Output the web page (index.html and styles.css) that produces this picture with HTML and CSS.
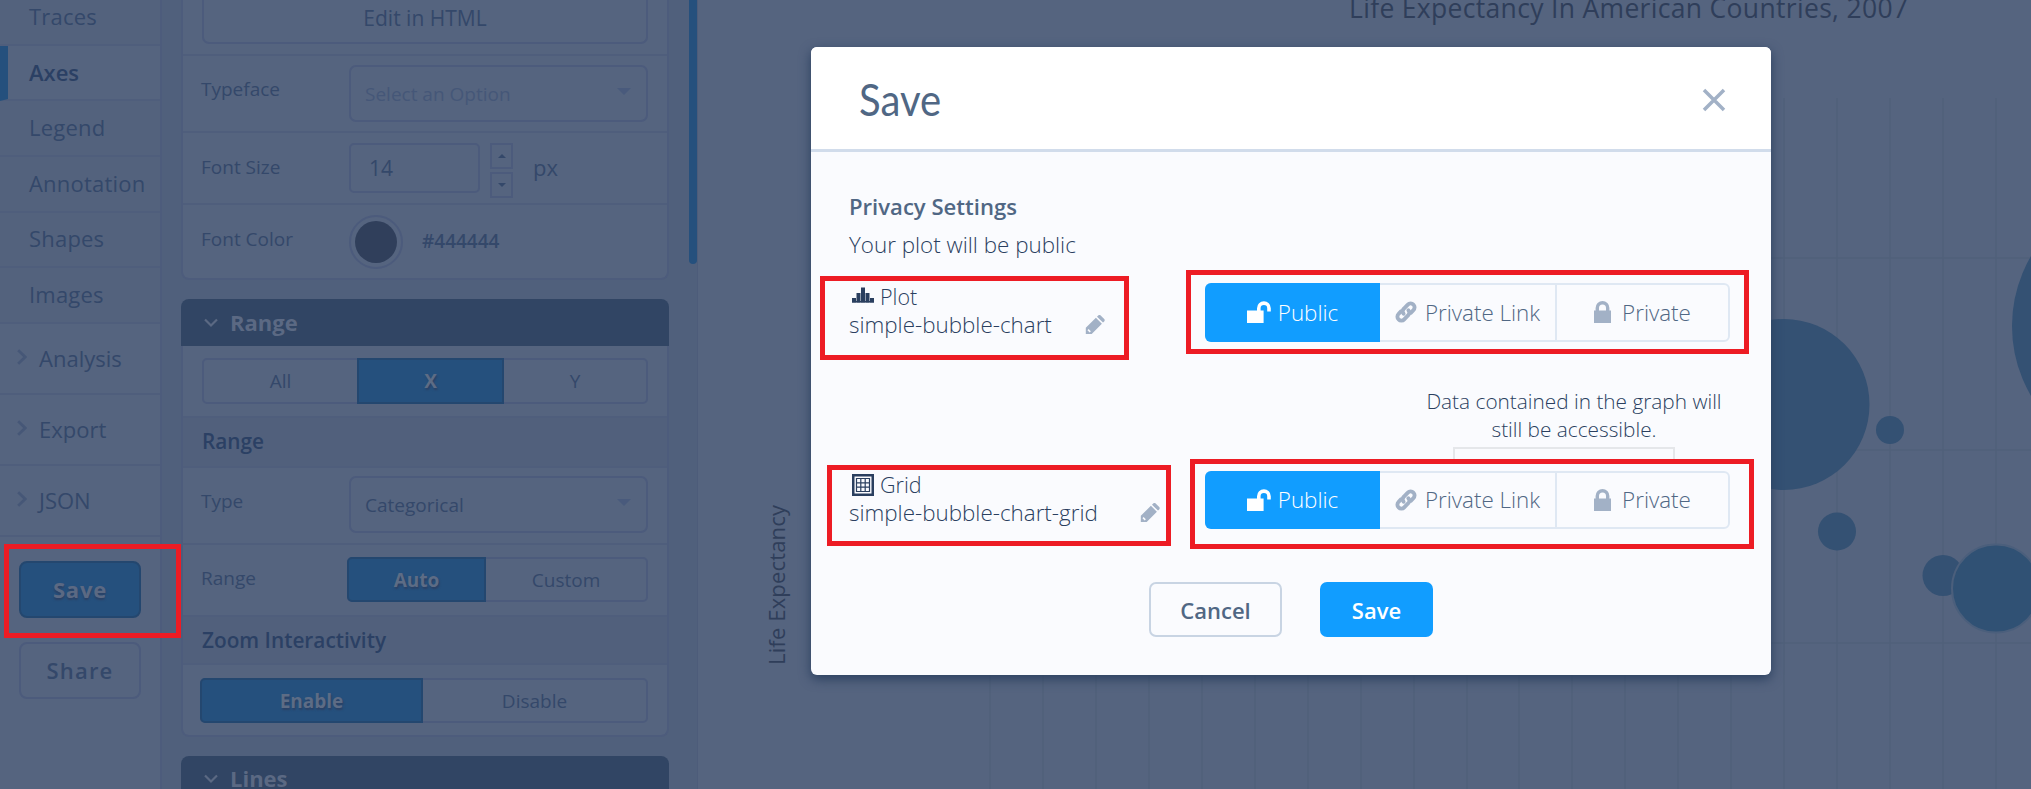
FILE: index.html
```html
<!DOCTYPE html>
<html lang="en">
<head>
<meta charset="utf-8">
<title>Save plot</title>
<link rel="stylesheet" href="styles.css">
</head>
<body>
<svg class="defs" width="0" height="0">
  <symbol id="unlock" viewBox="0 0 24 22"><path d="M0 9.5h10V7.2a6.9 6.9 0 0 1 13.8 0v3.3h-3.6V7.2a3.3 3.3 0 0 0-6.6 0v2.3H16.6V22H0z"/></symbol>
  <symbol id="lock" viewBox="0 0 17 22"><path d="M1.6 9.5V7a6.9 6.9 0 0 1 13.8 0v2.5H17V22H0V9.5zM5 9.500h7V7a3.500 3.500 0 0 0-7 0z"/></symbol>
  <symbol id="link" viewBox="0 0 22 22"><g fill="none" stroke="currentColor" stroke-width="3.900" stroke-linecap="round"><path d="M8.600 12.800a3.800 3.800 0 0 1 .4-5.300l3.800-3.900a3.800 3.800 0 0 1 5.600 0a3.800 3.800 0 0 1 0 5.500l-2.600 2.700"/><path d="M13.400 9.200a3.800 3.800 0 0 1-.4 5.300l-3.800 3.900a3.800 3.800 0 0 1-5.600 0a3.800 3.800 0 0 1 0-5.500l2.600-2.700"/></g></symbol>
  <symbol id="pencil" viewBox="0 0 20 20"><path d="M.8 12.800 10.900 2.800l6 5.900L6.700 19H.8zM12 1.700l1.200-1.200a1.800 1.800 0 0 1 2.500 0l3.500 3.500a1.800 1.800 0 0 1 0 2.400L18 7.600z"/><path d="m3 14.600 2.300 2.300" stroke="#fafbfe" stroke-width="1.500"/></symbol>
  <symbol id="chev" viewBox="0 0 10 16"><path d="m1.200 1.200 7 6.800-7 6.800" fill="none" stroke="currentColor" stroke-width="2.800"/></symbol>
  <symbol id="down" viewBox="0 0 14 10"><path d="m1 1.500 6 6 6-6" fill="none" stroke="currentColor" stroke-width="2.200"/></symbol>
</svg>

<div class="app">
  <nav class="sidebar">
    <div class="item">Traces</div>
    <div class="item active">Axes</div>
    <div class="item">Legend</div>
    <div class="item">Annotation</div>
    <div class="item">Shapes</div>
    <div class="item">Images</div>
    <div class="group"><svg class="chev"><use href="#chev"/></svg>Analysis</div>
    <div class="group"><svg class="chev"><use href="#chev"/></svg>Export</div>
    <div class="group"><svg class="chev"><use href="#chev"/></svg>JSON</div>
    <div class="side-actions">
      <div class="side-btn primary">Save</div>
      <div class="side-btn">Share</div>
    </div>
  </nav>

  <section class="panel">
    <div class="card first">
      <div class="row row-edit"><div class="edit">Edit in HTML</div></div>
      <div class="row row-typeface"><span class="label">Typeface</span><div class="select faint">Select an Option<i class="caret"></i></div></div>
      <div class="row row-size"><span class="label">Font Size</span><div class="number">14</div>
        <div class="spin"><b><i class="up"></i></b><b><i class="dn"></i></b></div><span class="unit">px</span></div>
      <div class="row row-color"><span class="label">Font Color</span><div class="swatch"><i></i></div><span class="hex">#444444</span></div>
    </div>

    <div class="card-head"><svg class="down"><use href="#down"/></svg>Range</div>
    <div class="card second">
      <div class="row row-xy"><div class="seg seg-xy"><span>All</span><span class="on">X</span><span>Y</span></div></div>
      <div class="row sub">Range</div>
      <div class="row row-type"><span class="label">Type</span><div class="select">Categorical<i class="caret"></i></div></div>
      <div class="row row-range"><span class="label">Range</span><div class="seg seg-auto"><span class="on">Auto</span><span>Custom</span></div></div>
      <div class="row sub zoom">Zoom Interactivity</div>
      <div class="row row-zoom"><div class="seg seg-zoom"><span class="on">Enable</span><span>Disable</span></div></div>
    </div>

    <div class="card-head lines"><svg class="down"><use href="#down"/></svg>Lines</div>
    <div class="scrollbar"></div>
  </section>

  <main class="chart">
    <svg class="plot" viewBox="698 0 1333 789">
      <g class="grid">
        <path d="M990 98V789M1043 98V789M1096 98V789M1149 98V789M1202 98V789M1255 98V789M1308 98V789M1361 98V789M1414 98V789M1467 98V789M1519 98V789M1572 98V789M1625 98V789M1678 98V789M1731 98V789M1784 98V789M1837 98V789M1890 98V789M1943 98V789M1996 98V789"/>
        <path d="M937 258H2031M937 450H2031M937 643H2031"/>
      </g>
      <g class="bubbles">
        <circle cx="1784" cy="404.500" r="85.500"/>
        <circle cx="1890" cy="430" r="14"/>
        <circle cx="1837" cy="531.500" r="19"/>
        <circle cx="1943" cy="575.500" r="20.500"/>
        <circle class="ring" cx="1996" cy="588.500" r="44"/>
        <circle cx="2150" cy="326" r="138"/>
      </g>
      <text class="title" x="1349" y="17.500" textLength="559">Life Expectancy In American Countries, 2007</text>
      <text class="axis" transform="translate(785 665) rotate(-90)" textLength="160">Life Expectancy</text>
    </svg>
  </main>
</div>

<div class="modal">
  <header class="modal-head">
    <h1>Save</h1>
    <svg class="close" viewBox="0 0 24 24"><path d="M2 2 22 22M22 2 2 22"/></svg>
  </header>
  <div class="modal-body">
    <h2>Privacy Settings</h2>
    <p class="lead">Your plot will be public</p>
    <div class="file">
      <div class="info">
        <div class="kind"><svg class="kind-icon" viewBox="0 0 22 22"><path d="M0 12h4v4.500H0zM4.500 7h4v9.500h-4zM9 1.500h4v15H9zM13.500 7h4v9.500h-4zM18 12h4v4.500h-4z"/><path d="M0 15h22v1.500H0z"/></svg>Plot</div>
        <div class="name plot-name">simple-bubble-chart<svg class="pencil"><use href="#pencil"/></svg></div>
      </div>
      <div class="privacy">
        <span class="on"><svg class="i-unlock"><use href="#unlock"/></svg>Public</span>
        <span class="mid"><svg class="i-link"><use href="#link"/></svg>Private Link</span>
        <span><svg class="i-lock"><use href="#lock"/></svg>Private</span>
      </div>
    </div>
    <p class="note">Data contained in the graph will<br>still be accessible.</p>
    <div class="bracket"></div>
    <div class="file second-file">
      <div class="info">
        <div class="kind"><svg class="kind-icon" viewBox="0 0 22 22"><path class="frame" d="M1.250 1.250h19.500v19.500H1.250z"/><path class="cells" d="M4.500 4.500h13v13h-13zM8.800 4.500v13M13.200 4.500v13M4.500 8.800h13M4.500 13.200h13"/></svg>Grid</div>
        <div class="name grid-name">simple-bubble-chart-grid<svg class="pencil"><use href="#pencil"/></svg></div>
      </div>
      <div class="privacy">
        <span class="on"><svg class="i-unlock"><use href="#unlock"/></svg>Public</span>
        <span class="mid"><svg class="i-link"><use href="#link"/></svg>Private Link</span>
        <span><svg class="i-lock"><use href="#lock"/></svg>Private</span>
      </div>
    </div>
    <div class="actions"><div class="btn cancel">Cancel</div><div class="btn save">Save</div></div>
  </div>
</div>

<div class="mark mark-save"></div>
<div class="mark mark-plot"></div>
<div class="mark mark-plot-privacy"></div>
<div class="mark mark-grid"></div>
<div class="mark mark-grid-privacy"></div>
</body>
</html>
```
FILE: styles.css
```css
* { box-sizing: border-box; }
body { margin: 0; height: 789px; overflow: hidden; position: relative; background: #55647f; font-family: "Open Sans", sans-serif; color: #34486a; }
svg { display: block; fill: currentColor; flex: none; }
.defs { position: absolute; }
h1, h2, p { margin: 0; }
.app { display: flex; height: 789px; overflow: hidden; }

/* Sidebar */
.sidebar { width: 162px; flex: none; border-right: 2px solid #4d5c7c; margin-top: -10px; height: 799px; font-size: 22px; letter-spacing: .2px; white-space: nowrap; }
.item { height: 55.660px; padding: 0 0 2px 29px; display: flex; align-items: center; border-bottom: 2px solid #4f5e7c; background: #53627d; }
.item.active { background: #55647f; border-left: 8px solid #25507d; padding-left: 21px; padding-bottom: 0; font-weight: 600; color: #2b4064; letter-spacing: 0; }
.group { height: 71px; display: flex; align-items: center; gap: 12px; padding-left: 17px; border-bottom: 2px solid #4f5e7c; letter-spacing: 0; }
.chev { width: 10px; height: 16px; color: #465777; margin-top: -3px; }
.side-actions { padding: 24px 0 0 19px; display: flex; flex-direction: column; gap: 24px; }
.side-btn { width: 122px; height: 57px; border: 2px solid #4c5b7c; border-radius: 8px; display: flex; align-items: center; justify-content: center; font-weight: 600; letter-spacing: 1.200px; }
.side-btn.primary { background: #25507d; border-color: #24476f; color: #5b6983; font-weight: 700; letter-spacing: .8px; text-shadow: 0 2px 2px #2b4064; }

/* Settings panel */
.panel { width: 536px; flex: none; background: #50607c; padding-left: 19px; position: relative; border-right: 1px solid #4d5c7a; }
.card { width: 488px; background: #55647f; border: 2px solid #4d5c7c; border-top: 0; border-radius: 0 0 8px 8px; font-size: 19px; }
.first { height: 280px; }
.second { height: 391px; }
.row { display: flex; align-items: flex-start; border-bottom: 2px solid #4f5e7c; padding-left: 19px; }
.row:last-child { border-bottom: 0; }
.label { width: 148px; margin-left: -1px; flex: none; line-height: 26px; }
.row-edit { height: 56px; }
.edit { width: 446px; height: 44px; border: 2px solid #4c5b7c; border-top: 0; border-radius: 0 0 7px 7px; display: flex; justify-content: center; padding-top: 4px; line-height: 28px; font-size: 21px; }
.row-typeface { height: 77px; padding-top: 9px; }
.row-typeface .label { padding-top: 11px; }
.row-type .label { padding-top: 12px; }
.select { width: 299px; height: 57px; border: 2px solid #4c5b7c; border-radius: 7px; padding: 0 15px 0 14px; display: flex; align-items: center; justify-content: space-between; }
.faint { color: #455778; }
.caret { border: 7.500px solid transparent; border-top-color: #495a7c; border-bottom: 0; margin-top: -4px; }
.row-size { height: 72px; padding-top: 10px; }
.row-size .label { padding-top: 11px; }
.number { width: 131px; height: 50px; border: 2px solid #4c5b7c; border-radius: 5px; padding-left: 18px; font-size: 21px; line-height: 47px; }
.spin { margin-left: 10px; display: flex; flex-direction: column; gap: 3px; }
.spin b { width: 23px; height: 26px; border: 2px solid #4c5b7c; display: flex; align-items: center; justify-content: center; }
.up { border: 4.500px solid transparent; border-bottom-color: #34486a; border-top: 0; }
.dn { border: 4.500px solid transparent; border-top-color: #34486a; border-bottom: 0; }
.unit { margin-left: 20px; font-size: 22px; line-height: 49px; }
.row-color { height: 73px; padding-top: 10px; }
.row-color .label { padding-top: 11px; }
.swatch { width: 54px; height: 54px; border: 2px solid #4c5b7c; border-radius: 50%; padding: 4px; }
.swatch i { display: block; width: 42px; height: 42px; border-radius: 50%; background: #303f5b; }
.hex { margin-left: 19px; font-weight: 600; line-height: 52px; }
.card-head { width: 488px; height: 47px; margin-top: 19px; background: #314564; border-radius: 8px 8px 0 0; display: flex; align-items: center; gap: 12px; padding: 0 0 1px 23px; color: #5b6983; font-size: 22px; font-weight: 700; }
.card-head.lines { line-height: 28px; padding-bottom: 3px; }
.down { width: 14px; height: 10px; margin-top: 2px; }
.row-xy { height: 72px; padding-top: 12px; }
.seg { display: grid; flex: none; height: 46px; border: 2px solid #4c5b7c; border-radius: 5px; }
.seg span { display: flex; align-items: center; justify-content: center; }
.seg .on { margin: -2px 0; background: #25507d; border: 2px solid #24476f; color: #5d6c85; font-weight: 700; text-shadow: 1px 2px 2px #2b4064; }
.seg .on:first-child { margin-left: -2px; border-radius: 5px 0 0 5px; }
.seg-xy { width: 446px; grid-template-columns: 153px 147px 1fr; }
.seg-auto { width: 301px; height: 45px; margin-left: -2px; grid-template-columns: 137px 1fr; }
.seg-zoom { width: 448px; height: 45px; margin-left: -2px; grid-template-columns: 221px 1fr; }
.sub { height: 50px; padding-bottom: 2px; background: #51607c; align-items: center; font-weight: 600; font-size: 20.800px; color: #2b4064; }
.row-type { height: 77px; padding-top: 8px; }
.row-range { height: 72px; padding-top: 12px; }
.row-range .label { padding-top: 8px; }
.zoom { height: 48px; padding-bottom: 0; }
.row-zoom { padding-top: 13px; }
.scrollbar { position: absolute; top: 0; right: 0; width: 8px; height: 264px; background: #25507d; border-radius: 0 0 4px 4px; }

/* Chart */
.chart { flex: 1; }
.plot { width: 1333px; height: 789px; }
.grid { stroke: #50607b; stroke-width: 1.500; }
.bubbles { fill: #345173; }
.ring { stroke: #4b5f7c; stroke-width: 2; fill: #305174; }
.title { font-size: 26.500px; fill: #2f3e5a; }
.axis { font-size: 22px; fill: #2f3e5a; }

/* Modal */
.modal { position: absolute; left: 811px; top: 47px; width: 960px; height: 628px; background: #fafbfe; border-radius: 6px; box-shadow: 0 4px 12px #2a3f5f; overflow: hidden; color: #2a3f5f; font-weight: 300; font-size: 22.400px; white-space: nowrap; }
.modal-head { height: 105px; background: #fff; border-bottom: 3px solid #d1dceb; display: flex; align-items: center; justify-content: space-between; padding: 0 45px 0 48px; }
h1 { font: 400 45px Lato, sans-serif; color: #506784; transform: scaleX(.89); transform-origin: left; padding-top: 1px; }
.close { width: 24px; height: 24px; margin-top: 3px; fill: none; stroke: #a2b1c6; stroke-width: 3.500; }
.modal-body { padding: 39px 41px 0 38px; }
h2 { font-size: 22.100px; font-weight: 600; line-height: 30px; color: #506784; }
.lead { line-height: 30px; margin-top: 9px; }
.file { display: flex; justify-content: space-between; height: 59px; margin-top: 23px; }
.info { line-height: 28px; }
.kind { display: flex; align-items: center; gap: 6px; padding-left: 3px; height: 28px; font-size: 21.500px; }
.kind-icon { width: 22px; height: 22px; }
.frame { fill: none; stroke: #2a3f5f; stroke-width: 2.500; }
.cells { fill: none; stroke: #2a3f5f; stroke-width: 1.200; }
.name { display: flex; justify-content: space-between; align-items: center; height: 28px; }
.plot-name { width: 256px; }
.grid-name { width: 311px; }
.pencil { width: 20px; height: 20px; color: #a2b1c6; }
.privacy { width: 525px; height: 59px; display: grid; grid-template-columns: 173px 177px 1fr; border: 2px solid #dfe8f3; border-radius: 6px; color: #506784; }
.privacy span { display: flex; align-items: center; justify-content: center; gap: 8px; padding-bottom: 1px; }
.privacy svg { color: #a2b1c6; }
.privacy .on { margin: -2px 0 -2px -2px; background: #119dff; color: #fff; border-radius: 6px 0 0 6px; gap: 7px; }
.privacy .on svg { color: #fff; }
.privacy .mid { border-right: 2px solid #dfe8f3; }
.i-unlock { width: 24px; height: 22px; }
.i-link { width: 22px; height: 22px; }
.i-lock { width: 17px; height: 22px; margin-right: 3px; }
.note { width: 300px; margin: 45px 0 0 575px; text-align: center; line-height: 28px; font-size: 20.800px; }
.bracket { width: 222px; height: 14px; margin: 4px 0 0 604px; border: 2px solid #e5e7ea; border-bottom: 0; }
.second-file { margin-top: 10px; height: 58px; }
.second-file .privacy { height: 58px; }
.actions { display: flex; gap: 38px; margin: 53px 0 0 300px; }
.btn { height: 55px; border-radius: 7px; display: flex; align-items: center; justify-content: center; font-weight: 600; font-size: 22px; }
.cancel { width: 133px; border: 2px solid #c8d4e3; color: #506784; }
.save { width: 113px; background: #119dff; color: #fff; }

/* Callout outlines */
.mark { position: absolute; border: 5px solid #ed1c24; }
.mark-save { left: 4px; top: 544px; width: 177px; height: 94px; }
.mark-plot { left: 820px; top: 276px; width: 309px; height: 84px; }
.mark-plot-privacy { left: 1186px; top: 270px; width: 563px; height: 84px; }
.mark-grid { left: 827px; top: 465px; width: 344px; height: 81px; }
.mark-grid-privacy { left: 1190px; top: 459px; width: 564px; height: 90px; }
```
